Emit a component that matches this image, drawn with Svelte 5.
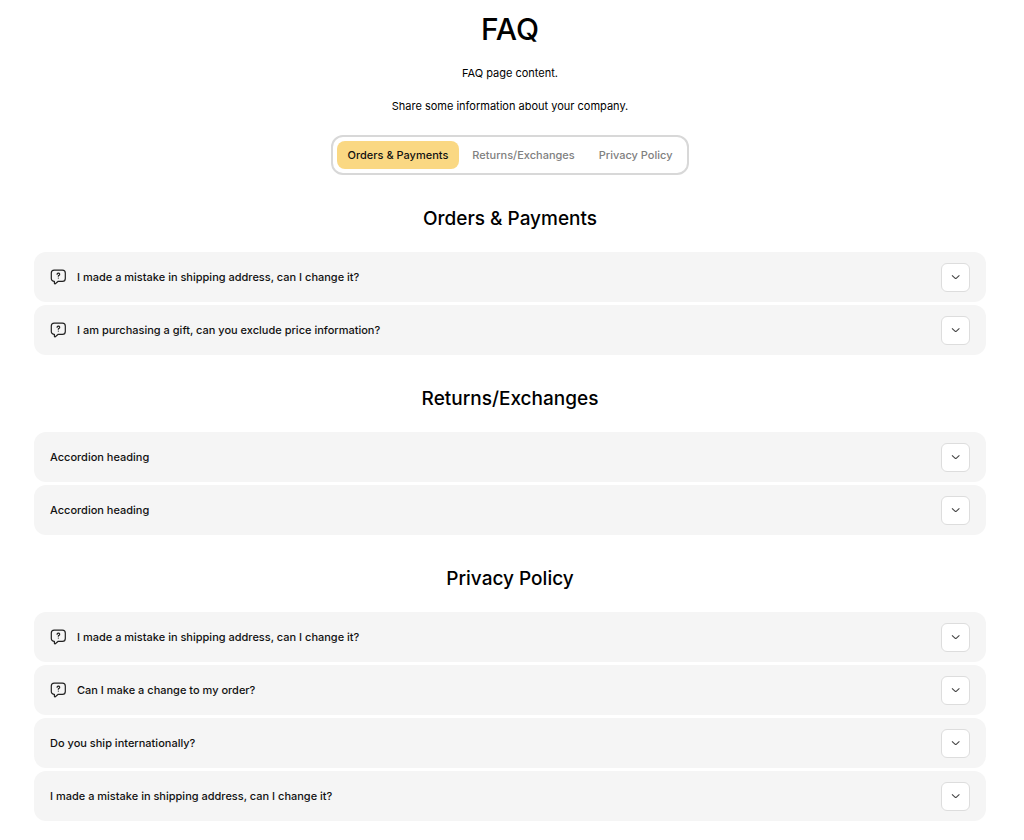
<script>
  const sections = [
    {
      id: 'orders',
      title: 'Orders & Payments',
      items: [
        { q: 'I made a mistake in shipping address, can I change it?', icon: true },
        { q: 'I am purchasing a gift, can you exclude price information?', icon: true }
      ]
    },
    {
      id: 'returns',
      title: 'Returns/Exchanges',
      items: [{ q: 'Accordion heading' }, { q: 'Accordion heading' }]
    },
    {
      id: 'privacy',
      title: 'Privacy Policy',
      items: [
        { q: 'I made a mistake in shipping address, can I change it?', icon: true },
        { q: 'Can I make a change to my order?', icon: true },
        { q: 'Do you ship internationally?' },
        { q: 'I made a mistake in shipping address, can I change it?' }
      ]
    }
  ];
  let active = $state('orders');
</script>

<main>
  <h1>FAQ</h1>
  <p>FAQ page content.</p>
  <p>Share some information about your company.</p>

  <nav>
    {#each sections as s}
      <a href="#{s.id}" class:active={active === s.id} onclick={() => (active = s.id)}>{s.title}</a>
    {/each}
  </nav>

  {#each sections as s}
    <section id={s.id}>
      <h2>{s.title}</h2>
      <div class="list">
        {#each s.items as item}
          <button type="button" class="row">
            {#if item.icon}
              <svg class="bubble" viewBox="0 0 16 16" aria-hidden="true">
                <path d="M4.200 1.200h8.200a2.900 2.900 0 0 1 2.900 2.900v5.300a2.900 2.900 0 0 1-2.900 2.900H8.200L5.300 14.700q-.8.500-.9-.5V12.300A2.900 2.900 0 0 1 1.300 9.400V4.100A2.900 2.900 0 0 1 4.200 1.200z" />
                <path d="M7.100 5.300a1.300 1.200 0 1 1 1.900 1.100q-.7.300-.7.800M8.300 9v.1" />
              </svg>
            {/if}
            <span class="question">{item.q}</span>
            <span class="toggle">
              <svg viewBox="0 0 10 6" aria-hidden="true"><path d="M1 1.400L4.200 4.300Q4.700 4.700 5.200 4.300L8.400 1.400" /></svg>
            </span>
          </button>
        {/each}
      </div>
    </section>
  {/each}
</main>

<style>
  :global(body) {
    background: #fff;
  }
  main {
    display: flex;
    flex-direction: column;
    align-items: center;
    padding: 11px 38px 18px 34px;
    font-family: Inter, 'Liberation Sans', sans-serif;
    color: #000;
  }
  h1 {
    margin: 0 0 19px;
    font-size: 30px;
    line-height: 36px;
    font-weight: 500;
  }
  p {
    margin: 0 0 19px;
    font-size: 11px;
    line-height: 14px;
  }
  nav {
    display: flex;
    gap: 2px;
    box-sizing: border-box;
    margin: 3px 0 0;
    padding: 4px;
    border: 2px solid #d8d8d8;
    border-radius: 12px;
  }
  nav a {
    padding: 0 11px;
    border-radius: 8px;
    font-size: 11px;
    line-height: 28px;
    font-weight: 500;
    color: #808080;
    text-decoration: none;
  }
  nav a.active {
    background: #fad883;
    color: #111;
  }
  section {
    width: 100%;
    margin-top: 31px;
  }
  h2 {
    margin: 0 0 20px;
    font-size: 19px;
    line-height: 26px;
    font-weight: 500;
    text-align: center;
  }
  .list {
    display: flex;
    flex-direction: column;
    gap: 3px;
  }
  .row {
    display: flex;
    align-items: center;
    width: 100%;
    min-height: 50px;
    padding: 0 16px;
    border: 0;
    border-radius: 12px;
    background: #f5f5f5;
    font: 500 11px/16px Inter, 'Liberation Sans', sans-serif;
    color: #111;
    text-align: left;
    cursor: pointer;
  }
  .question {
    flex: 1;
  }
  .bubble {
    width: 16px;
    height: 16px;
    margin-right: 11px;
    fill: none;
    stroke: #222;
    stroke-width: 1.2;
    stroke-linecap: round;
    stroke-linejoin: round;
  }
  .toggle {
    display: flex;
    align-items: center;
    justify-content: center;
    box-sizing: border-box;
    width: 29px;
    height: 29px;
    border: 1px solid #ddd;
    border-radius: 6px;
    background: #fff;
  }
  .toggle svg {
    width: 10px;
    height: 6px;
    fill: none;
    stroke: #444;
    stroke-width: 1.1;
  }
</style>
